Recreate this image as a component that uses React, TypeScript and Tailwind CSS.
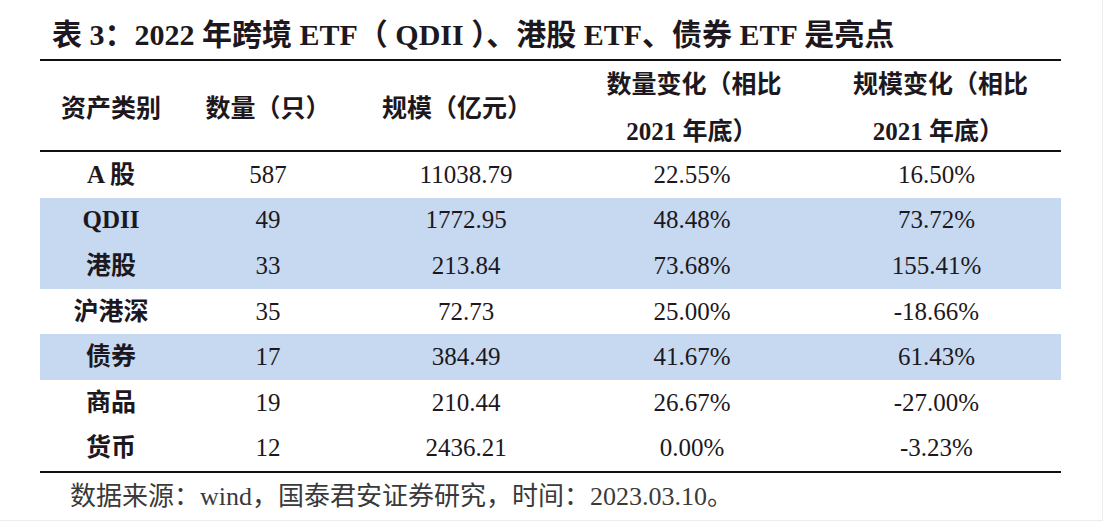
import React from "react";

type Row = {
  name: React.ReactNode;
  n: string;
  s: string;
  dn: string;
  ds: string;
  hl: boolean;
};

const rows: Row[] = [
  { name: "A 股", n: "587", s: "11038.79", dn: "22.55%", ds: "16.50%", hl: false },
  { name: "QDII", n: "49", s: "1772.95", dn: "48.48%", ds: "73.72%", hl: true },
  { name: "港股", n: "33", s: "213.84", dn: "73.68%", ds: "155.41%", hl: true },
  { name: "沪港深", n: "35", s: "72.73", dn: "25.00%", ds: "-18.66%", hl: false },
  { name: "债券", n: "17", s: "384.49", dn: "41.67%", ds: "61.43%", hl: true },
  { name: "商品", n: "19", s: "210.44", dn: "26.67%", ds: "-27.00%", hl: false },
  { name: "货币", n: "12", s: "2436.21", dn: "0.00%", ds: "-3.23%", hl: false },
];

const grid = "grid grid-cols-[142px_172px_218px_240px_249px]";

export default function App() {
  return (
    <div
      className="relative w-[1108px] h-[522px] bg-white text-[#1d1820] overflow-hidden"
      style={{ fontFamily: '"Liberation Serif", "Noto Sans CJK SC", serif' }}
    >
      <div className="w-[1103px] h-[521px] border-r border-b border-[#ececec]">
        <div className="pl-[52px] pt-[18px] text-[30px] leading-[34px] font-bold whitespace-nowrap">
          表 3：2022 年跨境 ETF（ QDII ）、港股 ETF、债券 ETF 是亮点
        </div>
        <div className="ml-[40px] mt-[7px] w-[1021px]">
          <div className={`${grid} h-[93px] border-t-2 border-b-2 border-[#111] items-center text-center font-bold text-[25px]`}>
            <div className="leading-[47px]">资产类别</div>
            <div className="leading-[47px]">数量（只）</div>
            <div className="leading-[47px] pr-[12px]">规模（亿元）</div>
            <div className="leading-[47px] pl-[4px]">
              <div>数量变化（相比</div>
              <div className="pr-[4px]">2021 年底）</div>
            </div>
            <div className="leading-[47px] pl-[8px]">
              <div>规模变化（相比</div>
              <div className="pr-[4px]">2021 年底）</div>
            </div>
          </div>
          {rows.map((r, i) => (
            <div
              key={i}
              className={`${grid} h-[45.6px] items-center text-center text-[25px] leading-[30px] ${r.hl ? "bg-[#c6d9f1]" : ""}`}
            >
              <div className="font-bold">{r.name}</div>
              <div>{r.n}</div>
              <div className="pl-[6px]">{r.s}</div>
              <div>{r.dn}</div>
              <div>{r.ds}</div>
            </div>
          ))}
          <div className="h-[2px] bg-[#111]" />
        </div>
        <div className="pl-[70px] mt-[9px] text-[26px] leading-[30px] text-[#3a3a3a] whitespace-nowrap">
          数据来源：wind，国泰君安证券研究，时间：2023.03.10。
        </div>
      </div>
    </div>
  );
}
